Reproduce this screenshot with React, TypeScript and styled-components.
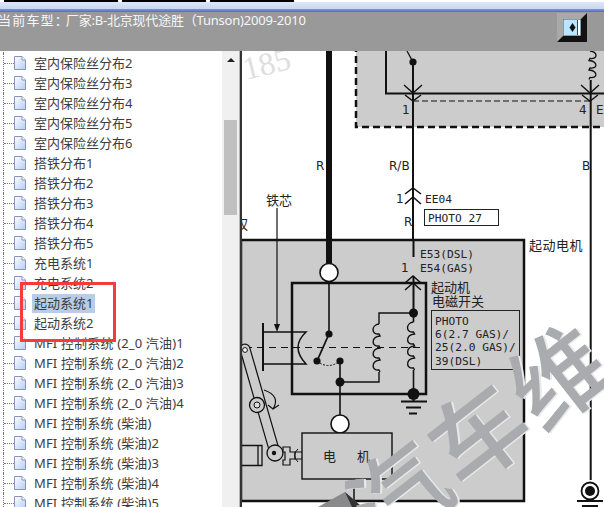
import React from "react";
import styled, { createGlobalStyle } from "styled-components";

const Global = createGlobalStyle`
  html, body { margin: 0; padding: 0; height: 100%; overflow: hidden; background: #fff; }
  * { box-sizing: border-box; }
`;

const Page = styled.div`
  position: relative;
  width: 604px;
  height: 507px;
  overflow: hidden;
  display: flex;
  flex-direction: column;
  font-family: "Noto Sans", "Noto Sans CJK SC", sans-serif;
`;

const TitleBar = styled.div`
  height: 9px;
  flex: none;
  background: linear-gradient(#e4ecfb 0, #c9d6f0 100%);
`;
const TabStrip = styled.div`
  display: flex;
  gap: 4px;
  height: 2px;
  padding-left: 4px;
  background: #fff;
`;
const TabBlock = styled.div<{ $w: number }>`
  width: ${(p) => p.$w}px;
  background: #000;
`;
const BlueRule = styled.div`
  height: 3px;
  flex: none;
  background: linear-gradient(#7e9bd8, #4a70c4);
`;
const Header = styled.header`
  height: 39px;
  flex: none;
  background: #999;
  display: flex;
  justify-content: space-between;
  align-items: flex-start;
  padding-right: 17px;
`;
const Vehicle = styled.div`
  margin: -1px 0 0 -2px;
  font-size: 13px;
  line-height: 18px;
  color: #f6f6f6;
  white-space: pre;
  letter-spacing: -0.2px;
`;
const VehicleLabel = styled.span`
  letter-spacing: 1.2px;
`;
const VehicleColon = styled.span`
  letter-spacing: -2px;
`;
const ToggleButton = styled.button`
  width: 30px;
  height: 29px;
  margin-top: 1px;
  padding: 0;
  display: block;
  background: #868686;
  border-style: solid;
  border-width: 6px;
  border-color: #a9a9a9 #111 #111 #a9a9a9;
`;

const Body = styled.main`
  flex: 1;
  min-height: 0;
  display: flex;
`;
const TreePanel = styled.nav`
  width: 222px;
  flex: none;
  overflow: hidden;
`;
const TreeList = styled.ul`
  list-style: none;
  margin: -18px 0 0;
  padding: 0 0 0 3px;
`;
const TreeRow = styled.li`
  height: 20px;
  display: flex;
  align-items: center;
  border-left: 1px dotted #777;
`;
const Connector = styled.span`
  width: 10px;
  flex: none;
  border-top: 1px dotted #777;
`;
const Label = styled.span<{ $selected?: boolean; $latin?: boolean }>`
  margin-left: 6px;
  padding: 0 2px;
  height: 19px;
  line-height: 19px;
  font-size: 13px;
  white-space: pre;
  color: #3c3c3c;
  letter-spacing: ${(p) => (p.$latin ? "0.16px" : "0")};
  background: ${(p) => (p.$selected ? "#b9cde8" : "transparent")};
`;

const ScrollBar = styled.div`
  width: 17px;
  flex: none;
  background: #f0f0f0;
  display: flex;
  flex-direction: column;
  align-items: center;
`;
const ScrollArrow = styled.div`
  width: 0;
  height: 0;
  margin-top: 7px;
  border-left: 4px solid transparent;
  border-right: 4px solid transparent;
  border-bottom: 4px solid #222;
`;
const ScrollThumb = styled.div`
  width: 13px;
  height: 95px;
  margin-top: 58px;
  background: #c0c0c0;
`;
const Divider = styled.div`
  width: 3px;
  flex: none;
  background: #333;
  border-left: 1px solid #b5b5b5;
`;
const Canvas = styled.section`
  flex: 1;
  min-width: 0;
  overflow: hidden;
  background: #fff;
`;
const Diagram = styled.svg`
  display: block;
`;
const Callout = styled.div`
  position: absolute;
  left: 20px;
  top: 282px;
  width: 96px;
  height: 60px;
  border: 3px solid #f93a3a;
`;

const rows = [
  "室内保险丝分布1", "室内保险丝分布2", "室内保险丝分布3", "室内保险丝分布4", "室内保险丝分布5", "室内保险丝分布6",
  "搭铁分布1", "搭铁分布2", "搭铁分布3", "搭铁分布4", "搭铁分布5",
  "充电系统1", "充电系统2", "起动系统1", "起动系统2",
  "MFI 控制系统 (2_0 汽油)1", "MFI 控制系统 (2_0 汽油)2", "MFI 控制系统 (2_0 汽油)3", "MFI 控制系统 (2_0 汽油)4",
  "MFI 控制系统 (柴油)", "MFI 控制系统 (柴油)2", "MFI 控制系统 (柴油)3", "MFI 控制系统 (柴油)4", "MFI 控制系统 (柴油)5",
];

const DocIcon = () => (
  <svg width="12" height="14" viewBox="0 0 12 14" style={{ flex: "none" }}>
    <defs>
      <linearGradient id="docFill" x1="0" y1="0" x2="1" y2="1">
        <stop offset="0" stopColor="#ffffff" />
        <stop offset="1" stopColor="#b4cef5" />
      </linearGradient>
    </defs>
    <path d="M.5.5H8L11.5 4V13.5H.5Z" fill="url(#docFill)" stroke="#8a93b8" />
    <path d="M8 .5V4H11.5" fill="#fff" stroke="#8a93b8" />
  </svg>
);

const coil = (x: number, y0: number, n: number, h: number, side: number) => {
  let d = `M${x} ${y0}`;
  let y = y0;
  for (let i = 0; i < n; i++) {
    d += ` C${x + side * 8} ${y + 1} ${x + side * 8} ${y + h - 1} ${x} ${y + h - 2} l${side * -1} 2`;
    y += h;
  }
  return d;
};

const W = "#111";
const Mark = ({ x, y, ch }: { x: number; y: number; ch: string }) => (
  <g transform={`rotate(-38 ${x} ${y})`}>
    <text className="ws" x={x + 1.5} y={y + 1.5} textAnchor="middle" dominantBaseline="central">{ch}</text>
    <text className="w" x={x} y={y} textAnchor="middle" dominantBaseline="central">{ch}</text>
  </g>
);

const Wiring = () => (
  <Diagram width="362" height="456" viewBox="242 51 362 456">
    <style>{`.m{font-family:"DejaVu Sans Mono","Liberation Mono",monospace;font-size:11.2px;fill:#222}
      .c{font-family:"Noto Sans CJK SC",sans-serif;font-size:13px;fill:#222}
      .r{font-family:"DejaVu Sans","Liberation Sans",sans-serif;font-size:12px;fill:#222}
      .w,.ws{font-family:"Noto Sans CJK SC",sans-serif;font-weight:500;font-size:96px}
      .w{fill:#a9abae}.ws{fill:#e9e9e9}`}</style>

    <text x="246" y="80" transform="rotate(-14 246 80)" fontFamily="Liberation Serif" fontSize="32" fill="#dedede">185</text>

    {/* upper fuse box */}
    <rect x="356" y="40" width="260" height="87" fill="#ccc" stroke={W} strokeWidth="2.5" strokeDasharray="7 4" />
    <path d="M386 40V93.5H610" fill="none" stroke={W} strokeWidth="2" />
    <path d="M413 101H590" stroke={W} strokeDasharray="6 3" />

    {/* starter enclosure */}
    <rect x="241" y="240" width="283" height="261" fill="#ccc" stroke={W} strokeWidth="2.5" />

    <path d="M407 51L413 62" stroke={W} strokeWidth="1.3" />
    <circle cx="413" cy="62" r="3.6" fill={W} />
    <path d="M413 62V240" stroke={W} strokeWidth="2" />
    <path d="M404 85L413 93L422 85M405 95L413 101L421 95" fill="none" stroke={W} strokeWidth="1.4" />
    <path d={coil(590, 51, 3, 9.5, 1)} fill="none" stroke={W} strokeWidth="1.3" />
    <path d="M590.7 80V480" stroke={W} strokeWidth="2" />
    <path d="M581 85L590 93L599 85M582 95L590 101L598 95" fill="none" stroke={W} strokeWidth="1.4" />
    <text className="r" x="402" y="114">1</text>
    <text className="r" x="579" y="114">4</text>
    <text className="r" x="596" y="114">E6</text>

    {/* thick R wire */}
    <rect x="326" y="51" width="6" height="215" fill={W} />
    <text className="r" x="316" y="170">R</text>
    <text className="r" x="389" y="170">R/B</text>
    <text className="r" x="582" y="170">B</text>

    {/* EE04 */}
    <path d="M405 194L413 188L421 194M405 204L413 197L421 204" fill="none" stroke={W} strokeWidth="1.5" />
    <text className="r" x="396" y="203">1</text>
    <text className="m" x="425" y="203">EE04</text>
    <rect x="424.5" y="209.5" width="74" height="16" fill="#fff" stroke="#222" />
    <text className="m" x="428" y="222">PHOTO 27</text>
    <text className="r" x="404" y="226">R</text>

    {/* 铁芯 */}
    <text className="c" x="266" y="205">铁芯</text>
    <path d="M277 208V326" stroke={W} strokeWidth="1.2" />
    <path d="M274 324H280L277 332Z" fill={W} />
    <text className="c" x="235" y="229">权</text>

    <path d="M413.5 240V257" stroke={W} strokeWidth="2" />
    <text className="c" x="529" y="250" letterSpacing=".5">起动电机</text>
    <text className="m" x="420" y="258">E53(DSL)</text>
    <text className="m" x="420" y="272">E54(GAS)</text>
    <text className="r" x="401" y="272">1</text>

    {/* solenoid box */}
    <rect x="292" y="283" width="134" height="111" fill="none" stroke={W} strokeWidth="2.5" />
    <circle cx="329" cy="272.5" r="9" fill="#fff" stroke={W} strokeWidth="1.6" />
    <path d="M405 283L413 276L421 283M405 290L413 283L421 290" fill="none" stroke={W} strokeWidth="1.5" />
    <path d="M413.5 276V318" stroke={W} strokeWidth="2" />
    <circle cx="413.5" cy="313" r="4.5" fill={W} />
    <path d={coil(413.5, 322, 4, 12, -1)} fill="none" stroke={W} strokeWidth="1.4" />
    <path d="M413.5 318V322M413.5 370V395" stroke={W} strokeWidth="1.6" />
    <path d="M413 313H379V324" fill="none" stroke={W} strokeWidth="1.4" />
    <path d={coil(379, 324, 4, 12, -1)} fill="none" stroke={W} strokeWidth="1.4" />
    <path d="M379 372V382H340" fill="none" stroke={W} strokeWidth="1.4" />
    <path d="M329 283V334" stroke={W} strokeWidth="1.6" />
    <circle cx="329" cy="334" r="3.6" fill={W} />
    <path d="M329 334L317 361" stroke={W} strokeWidth="1.8" />
    <circle cx="317" cy="361" r="3.6" fill={W} />
    <circle cx="340" cy="361" r="3.6" fill={W} />
    <path d="M317 361Q328 370 340 361" fill="none" stroke={W} strokeWidth="1" strokeDasharray="2 1.5" />
    <path d="M340 361V424" stroke={W} strokeWidth="1.6" />
    <circle cx="340" cy="382" r="4.5" fill={W} />
    <circle cx="413.5" cy="394" r="6" fill={W} />
    <path d="M413.5 394V401" stroke={W} strokeWidth="2" />
    <path d="M401 401.5H427M406 407.5H421M409 413.5H417" stroke={W} strokeWidth="1.8" />
    <path d="M245 347.5H426" stroke={W} strokeWidth="1.2" strokeDasharray="7 5" />

    {/* plunger */}
    <path d="M263 323V371" stroke={W} strokeWidth="2" />
    <path d="M263 332H306Q290 347 306 364H263" fill="none" stroke={W} strokeWidth="1.5" />

    {/* solenoid labels */}
    <text className="c" x="431" y="292">起动机</text>
    <text className="c" x="432" y="306">电磁开关</text>
    <rect x="431.5" y="310.5" width="88" height="59" fill="none" stroke="#222" />
    <text className="m" x="435" y="325">PHOTO</text>
    <text className="m" x="435" y="338">6(2.7 GAS)/</text>
    <text className="m" x="435" y="351">25(2.0 GAS)/</text>
    <text className="m" x="435" y="365">39(DSL)</text>

    {/* lever and pinion */}
    <path d="M245 349L275 453" stroke={W} strokeWidth="11" strokeLinecap="round" />
    <path d="M245 349L275 453" stroke="#ccc" strokeWidth="8.6" strokeLinecap="round" />
    <circle cx="245" cy="350" r="2.4" fill="#fff" stroke={W} />
    <circle cx="257" cy="405" r="7.5" fill="#ccc" stroke={W} strokeWidth="1.3" />
    <circle cx="257" cy="405" r="3" fill="#ddd" stroke={W} />
    <circle cx="275" cy="453" r="8" fill="#ccc" stroke={W} strokeWidth="1.3" />
    <circle cx="274" cy="453" r="2.2" fill={W} />
    <path d="M264 390Q281 396 273 409M268 405L273 409L279 405" fill="none" stroke={W} strokeWidth="1.2" />
    <path d="M242 445.5H262V465.5H242M258 445.5V465.5" fill="none" stroke={W} strokeWidth="1.3" />
    <path d="M283 447H290V452H295V459H290V465H283V460H285V452H283Z" fill="#ccc" stroke={W} strokeWidth="1.2" />
    <path d="M295 452H302M295 459H302M298 449Q291 455 298 462" fill="none" stroke={W} />

    {/* motor */}
    <circle cx="340" cy="424" r="9" fill="#fff" stroke={W} strokeWidth="1.6" />
    <rect x="302" y="433" width="90" height="46" fill="#ccc" stroke={W} strokeWidth="1.4" />
    <text className="c" x="323" y="461">电</text>
    <text className="c" x="357" y="461">机</text>
    <path d="M354 479V501" stroke={W} strokeWidth="1.5" />

    {/* bottom right terminal */}
    <circle cx="590" cy="491" r="8.5" fill="#fff" stroke={W} strokeWidth="1.8" />
    <circle cx="590" cy="491" r="5" fill={W} />
    <path d="M577 501H603M582 506H598" stroke={W} strokeWidth="1.8" />

    {/* watermark */}
    <path d="M318 507L345 492L362 507Z" fill="#8a8a8c" />
    <path d="M345 492L362 507H352Z" fill="#333" />
    <Mark x={395} y={490} ch="汽" />
    <Mark x={475} y={430} ch="车" />
    <Mark x={555} y={372} ch="维" />
  </Diagram>
);

export default function App() {
  return (
    <Page>
      <Global />
      <TitleBar>
        <TabStrip>
          <TabBlock $w={114} />
          <TabBlock $w={84} />
          <TabBlock $w={84} />
        </TabStrip>
      </TitleBar>
      <BlueRule />
      <Header>
        <Vehicle>
          <VehicleLabel>当前车型</VehicleLabel>
          <VehicleColon>：</VehicleColon>厂家:B-北京现代途胜（Tunson)2009-2010
        </Vehicle>
        <ToggleButton aria-label="toggle">
          <svg width="18" height="17" viewBox="0 0 18 17" style={{ display: "block" }}>
            <rect width="18" height="17" fill="#b9e6ff" stroke="#555" />
            <rect x="14" y="1" width="3" height="15" fill="#fff" />
            <rect x="14" y="1" width="1" height="15" fill="#444" />
            <path d="M9.5 4L12.5 8.5L9.5 13L6.5 8.5Z" fill="#111" />
          </svg>
        </ToggleButton>
      </Header>
      <Body>
        <TreePanel>
          <TreeList>
            {rows.map((r) => (
              <TreeRow key={r}>
                <Connector />
                <DocIcon />
                <Label $selected={r === "起动系统1"} $latin={r.startsWith("MFI")}>{r}</Label>
              </TreeRow>
            ))}
          </TreeList>
        </TreePanel>
        <ScrollBar>
          <ScrollArrow />
          <ScrollThumb />
        </ScrollBar>
        <Divider />
        <Canvas>
          <Wiring />
        </Canvas>
      </Body>
      <Callout />
    </Page>
  );
}
